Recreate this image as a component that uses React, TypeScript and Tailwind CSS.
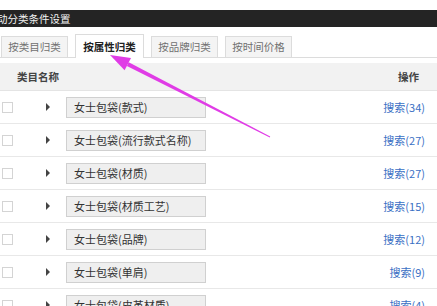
import React from 'react';

const rows = [
  { name: '女士包袋(款式)', count: 34 },
  { name: '女士包袋(流行款式名称)', count: 27 },
  { name: '女士包袋(材质)', count: 27 },
  { name: '女士包袋(材质工艺)', count: 15 },
  { name: '女士包袋(品牌)', count: 12 },
  { name: '女士包袋(单肩)', count: 9 },
  { name: '女士包袋(皮革材质)', count: 4 },
];

const tabs = ['按类目归类', '按属性归类', '按品牌归类', '按时间价格'];

export default function App() {
  return (
    <div
      className="relative w-[437px] h-[306px] overflow-hidden bg-white text-[11px] text-[#333]"
      style={{ fontFamily: '"Microsoft YaHei", "Noto Sans CJK SC", sans-serif' }}
    >
      <div className="h-[10px]" />
      <div className="h-[17px] bg-[#242424] text-[#f2f2f2] text-[10.5px] leading-[17px] -ml-[3px]">动分类条件设置</div>

      {/* tabs */}
      <div className="mt-[8px] h-[23px] flex items-end border-b border-[#dcdcdc] pl-[1px] gap-[7px] text-[10.5px]">
        {tabs.map((t, i) =>
          i === 1 ? (
            <div
              key={t}
              className="h-[24px] w-[69px] -mb-px bg-white border border-b-0 border-[#dcdcdc] flex items-center justify-center font-bold text-[#222]"
            >
              {t}
            </div>
          ) : (
            <div
              key={t}
              className="h-[21px] w-[67px] bg-[#f4f4f4] border border-b-0 border-[#dcdcdc] flex items-center justify-center text-[#707070]"
            >
              {t}
            </div>
          )
        )}
      </div>

      {/* header */}
      <div className="mt-[5px] h-[28px] bg-[#f2f2f2] border-b border-[#e4e4e4] flex items-center justify-between pl-[17px] pr-[18px] font-bold text-[10.5px] text-[#444]">
        <span>类目名称</span>
        <span>操作</span>
      </div>

      {/* rows */}
      {rows.map((r) => (
        <div key={r.name} className="h-[33px] border-b border-[#e8e8e8] flex items-center">
          <div className="ml-[2px] w-[11px] h-[11px] border border-[#d4d4d4] bg-white" />
          <div className="ml-[33px] w-0 h-0 border-y-[4px] border-y-transparent border-l-[4px] border-l-[#444]" />
          <div className="ml-[16px] w-[140px] h-[21px] bg-[#efefef] border border-[#d0d0d0] flex items-center pl-[7px] text-[#333]">
            {r.name}
          </div>
          <div className="ml-auto pr-[12px] text-[#3a6fc4]">搜索({r.count})</div>
        </div>
      ))}

      {/* annotation arrow */}
      <svg className="absolute left-0 top-0 pointer-events-none" width="437" height="306">
        <polygon points="110,55 131,58 124.6,70.3" fill="#e03ce6" />
        <polygon points="128.7,62.3 126.9,65.9 269.8,137.4 270.2,136.6" fill="#e03ce6" />
      </svg>
    </div>
  );
}
